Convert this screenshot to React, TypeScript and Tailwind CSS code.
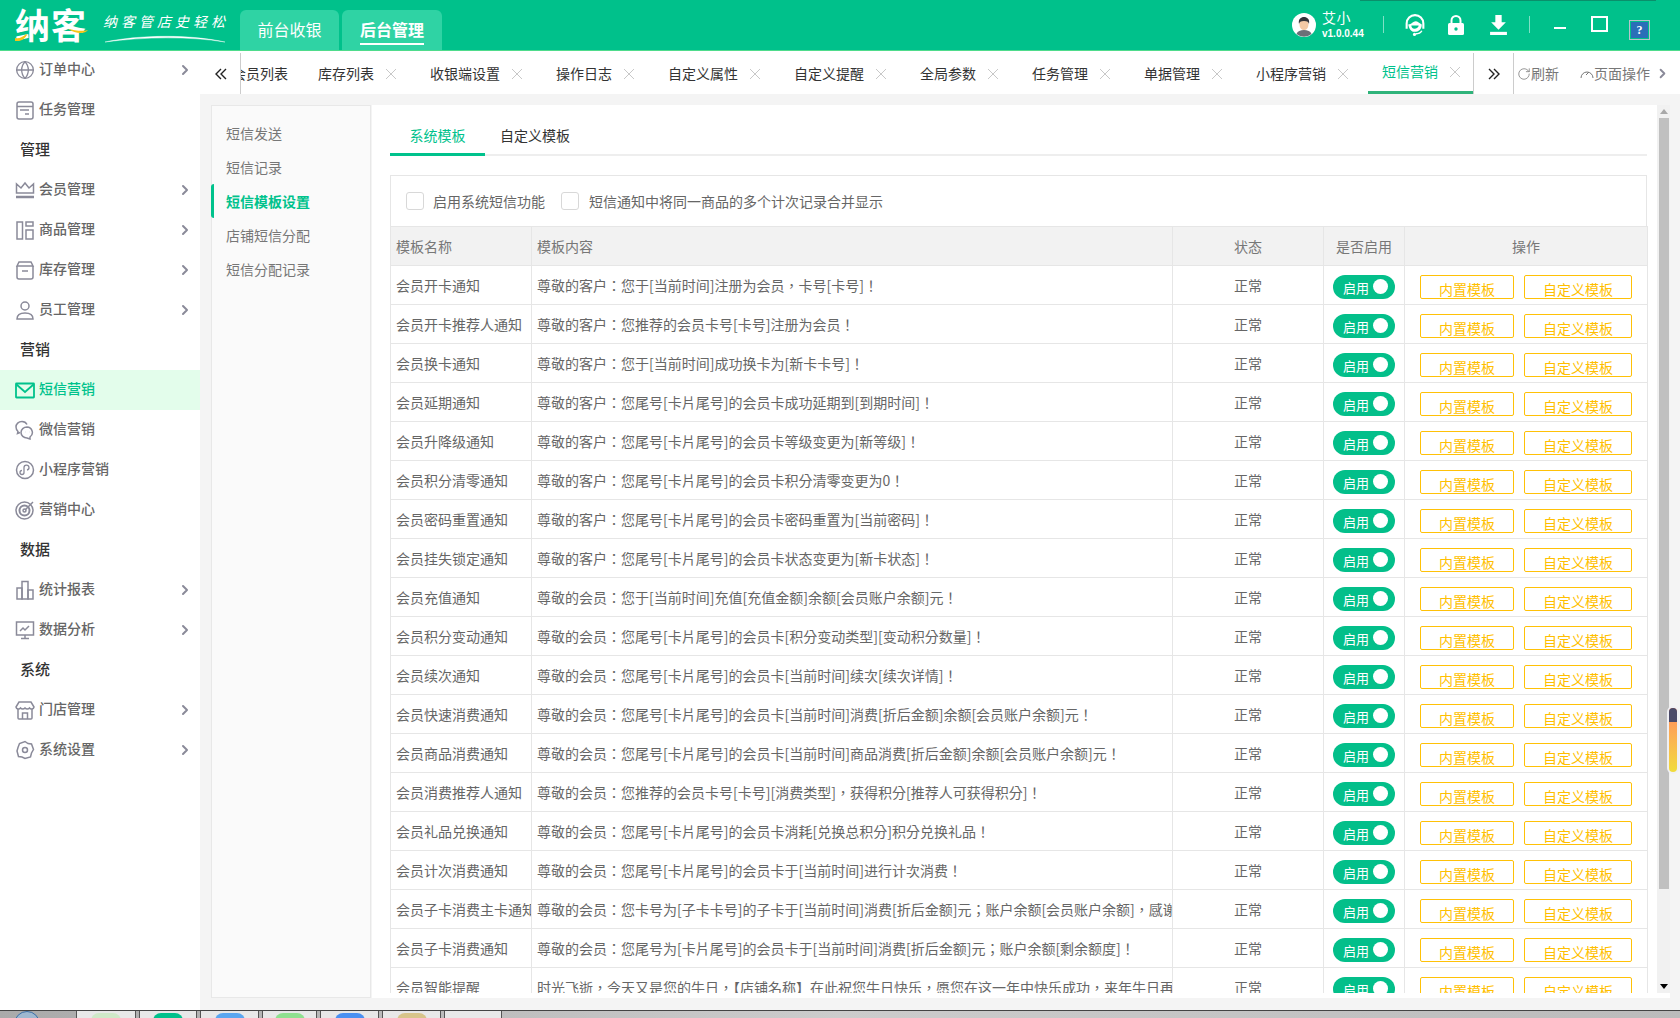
import { ChevronRight, Globe, RotateCw } from 'lucide-react'
import type { ReactNode } from 'react'

const gray = '#8a8a99'

function Ico({ children, color = gray }: { children: ReactNode; color?: string }) {
  return (
    <svg width="20" height="20" viewBox="0 0 20 20" fill="none" stroke={color} strokeWidth="1.5" className="shrink-0">
      {children}
    </svg>
  )
}

const icons: Record<string, ReactNode> = {
  task: <Ico><rect x="2" y="2" width="16" height="17" rx="2" /><path d="M2 6.5h16M5 10h9M10 14h4" /></Ico>,
  crown: <Ico><path d="M1.5 13V4l4.5 4L10 3l4 5 4.500-4v9z" /><path d="M1 17h18" strokeWidth="2.500" /></Ico>,
  goods: <Ico><rect x="2" y="2" width="5.500" height="17" /><rect x="11" y="2" width="7" height="4" /><rect x="11" y="10" width="7" height="9" /></Ico>,
  stock: <Ico><path d="M4 2h12l2 4H2z" /><path d="M2 6v11a2 2 0 0 0 2 2h12a2 2 0 0 0 2-2V6M7 11h6" /></Ico>,
  staff: <Ico><circle cx="10" cy="6" r="4" /><path d="M2 19c0-4 3-6 8-6s8 2 8 6z" /></Ico>,
  mail: <Ico color="#00c28c"><rect x="1" y="3.500" width="18" height="14" rx="0.500" strokeWidth="1.800" /><path d="M1.500 4.500 10 12l8.500-7.500" strokeWidth="1.800" /></Ico>,
  wechat: <Ico><path d="M12 4.500C11 2.500 9 1.500 7 1.500 3.500 1.500 1 4 1 7c0 2 1 3.500 2 4.500l-.5 2 2.500-1" /><path d="M12 7a6 5.500 0 1 0 0 11l3 1 0-2a5.500 5.500 0 0 0-3-10z" /><path d="M10 12h.1M14 12h.1" strokeWidth="2" /></Ico>,
  mini: <Ico><circle cx="10" cy="10" r="8.500" /><path d="M7 9.500v3a2 2 0 1 1-2-2M7 10.500v-3a2.500 2.500 0 1 1 3 2.500" transform="translate(2 0)" strokeWidth="1.300" /></Ico>,
  target: <Ico><circle cx="9.500" cy="10.500" r="8.500" /><circle cx="9.500" cy="10.500" r="5" strokeWidth="2" /><circle cx="9.500" cy="10.500" r="1.500" /><path d="M10 10l8-8" /></Ico>,
  chart: <Ico><rect x="2" y="8" width="5" height="11" /><rect x="7" y="1.500" width="6" height="17.500" /><rect x="13" y="10" width="5" height="9" /></Ico>,
  screen: <Ico><rect x="1.500" y="2" width="17" height="13" /><path d="M5 11l3-3 2 2 4-4M6 18.500h8M10 15v3.500" /></Ico>,
  store: <Ico><path d="M4 2h12l3 5a2.500 2.500 0 0 1-4.500 1A3 3 0 0 1 10 8a3 3 0 0 1-4.500 0A2.500 2.500 0 0 1 1 7z" /><path d="M3 9v9a1 1 0 0 0 1 1h12a1 1 0 0 0 1-1V9M7.500 19v-6h5v6" /></Ico>,
  gear: <Ico><path d="M10 1.500l3 2 3.500.5 2 5.500-2 3.500-1 4-5.500 1.500-3-1.500-3.500-.5-1.500-5.500 1-3.500 1.500-4z" /><circle cx="10" cy="10" r="2.500" /></Ico>,
}

type NavItem = { label: string; icon?: ReactNode; arrow?: boolean; title?: boolean; active?: boolean }

const nav: NavItem[] = [
  { label: '订单中心', icon: <Globe size={20} color={gray} strokeWidth={1.6} className="shrink-0" />, arrow: true },
  { label: '任务管理', icon: icons.task },
  { label: '管理', title: true },
  { label: '会员管理', icon: icons.crown, arrow: true },
  { label: '商品管理', icon: icons.goods, arrow: true },
  { label: '库存管理', icon: icons.stock, arrow: true },
  { label: '员工管理', icon: icons.staff, arrow: true },
  { label: '营销', title: true },
  { label: '短信营销', icon: icons.mail, active: true },
  { label: '微信营销', icon: icons.wechat },
  { label: '小程序营销', icon: icons.mini },
  { label: '营销中心', icon: icons.target },
  { label: '数据', title: true },
  { label: '统计报表', icon: icons.chart, arrow: true },
  { label: '数据分析', icon: icons.screen, arrow: true },
  { label: '系统', title: true },
  { label: '门店管理', icon: icons.store, arrow: true },
  { label: '系统设置', icon: icons.gear, arrow: true },
]

const tabs = ['库存列表', '收银端设置', '操作日志', '自定义属性', '自定义提醒', '全局参数', '任务管理', '单据管理', '小程序营销']

const smsMenu = ['短信发送', '短信记录', '短信模板设置', '店铺短信分配', '短信分配记录']

const rows = [
  ['会员开卡通知', '尊敬的客户：您于[当前时间]注册为会员，卡号[卡号]！'],
  ['会员开卡推荐人通知', '尊敬的客户：您推荐的会员卡号[卡号]注册为会员！'],
  ['会员换卡通知', '尊敬的客户：您于[当前时间]成功换卡为[新卡卡号]！'],
  ['会员延期通知', '尊敬的客户：您尾号[卡片尾号]的会员卡成功延期到[到期时间]！'],
  ['会员升降级通知', '尊敬的客户：您尾号[卡片尾号]的会员卡等级变更为[新等级]！'],
  ['会员积分清零通知', '尊敬的客户：您尾号[卡片尾号]的会员卡积分清零变更为0！'],
  ['会员密码重置通知', '尊敬的客户：您尾号[卡片尾号]的会员卡密码重置为[当前密码]！'],
  ['会员挂失锁定通知', '尊敬的客户：您尾号[卡片尾号]的会员卡状态变更为[新卡状态]！'],
  ['会员充值通知', '尊敬的会员：您于[当前时间]充值[充值金额]余额[会员账户余额]元！'],
  ['会员积分变动通知', '尊敬的会员：您尾号[卡片尾号]的会员卡[积分变动类型][变动积分数量]！'],
  ['会员续次通知', '尊敬的会员：您尾号[卡片尾号]的会员卡[当前时间]续次[续次详情]！'],
  ['会员快速消费通知', '尊敬的会员：您尾号[卡片尾号]的会员卡[当前时间]消费[折后金额]余额[会员账户余额]元！'],
  ['会员商品消费通知', '尊敬的会员：您尾号[卡片尾号]的会员卡[当前时间]商品消费[折后金额]余额[会员账户余额]元！'],
  ['会员消费推荐人通知', '尊敬的会员：您推荐的会员卡号[卡号][消费类型]，获得积分[推荐人可获得积分]！'],
  ['会员礼品兑换通知', '尊敬的会员：您尾号[卡片尾号]的会员卡消耗[兑换总积分]积分兑换礼品！'],
  ['会员计次消费通知', '尊敬的会员：您尾号[卡片尾号]的会员卡于[当前时间]进行计次消费！'],
  ['会员子卡消费主卡通知', '尊敬的会员：您卡号为[子卡卡号]的子卡于[当前时间]消费[折后金额]元；账户余额[会员账户余额]，感谢您的光临！'],
  ['会员子卡消费通知', '尊敬的会员：您尾号为[卡片尾号]的会员卡于[当前时间]消费[折后金额]元；账户余额[剩余额度]！'],
  ['会员智能提醒', '时光飞逝，今天又是您的牛日，【店铺名称】在此祝您牛日快乐，愿您在这一年中快乐成功，来年牛日再相聚！'],
]

function CloseX() {
  return (
    <svg width="10" height="10" viewBox="0 0 10 10" stroke="#c8c8c8" strokeWidth="1" className="shrink-0">
      <path d="M0 0l10 10M10 0L0 10" />
    </svg>
  )
}

function DoubleChevron({ flip }: { flip?: boolean }) {
  return (
    <svg width="12" height="12" viewBox="0 0 12 12" fill="none" stroke="#222" strokeWidth="1.400" className={flip ? 'rotate-180' : ''}>
      <path d="M1 1l5 5-5 5M6 1l5 5-5 5" />
    </svg>
  )
}

function Header() {
  return (
    <header className="h-[51px] shrink-0 flex bg-[#00c18b] border-b border-[#4fdc8c] relative">
      <div className="w-[240px] shrink-0 flex items-center pl-[15px]">
        <div className="relative w-[74px] h-[34px] mt-[-2px]">
          <span className="text-[35px] leading-[34px] font-bold text-white tracking-[1px] whitespace-nowrap">纳客</span>
          <svg width="74" height="34" viewBox="0 0 74 34" className="absolute left-0 top-0">
            <path d="M0 31c4 1 8-1 11-4l1 1c-2 4-7 7-12 6zM53 22c6 1 14 3 20 1-3 4-12 4-20-1z" fill="#f5c518" />
          </svg>
        </div>
        <div className="ml-[14px] relative w-[125px] h-[34px]">
          <span className="text-[14px] leading-[22px] text-white italic tracking-[4px] whitespace-nowrap">纳客管店史轻松</span>
          <svg width="125" height="12" viewBox="0 0 125 12" className="absolute left-0 top-[24px]">
            <path d="M2 10C30 4 80 1 122 10 85 4 40 5 2 10z" fill="#fff" stroke="#fff" strokeWidth="0.400" />
          </svg>
        </div>
      </div>
      <div className="flex items-end gap-[3px]">
        <div className="w-[99px] h-[40px] rounded-t-[6px] bg-[#2fd3a4] flex justify-center pt-[7px] text-[16px] leading-[24px] text-white">前台收银</div>
        <div className="w-[100px] h-[40px] rounded-t-[6px] bg-[#2fd3a4] flex justify-center pt-[7px]">
          <span className="h-[28px] text-[16px] leading-[24px] text-white font-bold border-b-[2px] border-white">后台管理</span>
        </div>
      </div>
      <div className="flex-1" />
      <div className="flex items-center h-[49px]">
        <svg width="24" height="24" viewBox="0 0 24 24" className="shrink-0">
          <circle cx="12" cy="12" r="12" fill="#fff" />
          <path d="M4.500 21c1-3 4-4 7.500-4s6.500 1 7.500 4a12 12 0 0 1-15 0z" fill="#6b6f78" />
          <ellipse cx="12" cy="11.500" rx="4.500" ry="5.500" fill="#f3c9a5" />
          <path d="M7 11c-1-5 2-7 5-7s6 2 5 7c-.500-2-1.500-3-5-3s-4.500 1-5 3z" fill="#33343a" />
        </svg>
        <div className="ml-[6px] w-[61px] text-white mb-[1px]">
          <div className="text-[14px] leading-[20px] tracking-[0.500px]">艾小</div>
          <div className="text-[10px] leading-[14px] font-['Liberation_Sans',sans-serif] font-bold">v1.0.0.44</div>
        </div>
        <div className="w-px h-[17px] bg-[#7fe0c5]" />
        <svg width="22" height="24" viewBox="0 0 21 23" fill="none" stroke="#fff" className="ml-[20px] shrink-0">
          <path d="M2.500 15V10a8 8 0 0 1 16 0v5" strokeWidth="2" />
          <path d="M4 11c3 0 5-3 7-3s4 2 6 3c0 5-3 7-7 7-3 0-5-2-6-7z" fill="#fff" stroke="none" />
          <path d="M7 12h7c0 2-2 3-4 3s-3-1-3-3z" fill="#00c18b" stroke="none" />
          <path d="M17 17c-1 2-3 3-6 3" strokeWidth="1.500" />
          <circle cx="10" cy="20.500" r="1.500" fill="#fff" stroke="none" />
        </svg>
        <svg width="16" height="20" viewBox="0 0 16 20" className="ml-[22px] shrink-0">
          <path d="M3.500 9V5.500a4.500 4.500 0 0 1 9 0V9" fill="none" stroke="#fff" strokeWidth="2" />
          <rect y="8" width="16" height="12" rx="1.500" fill="#fff" />
          <circle cx="8" cy="14" r="1.700" fill="#00c18b" />
        </svg>
        <svg width="17" height="20" viewBox="0 0 16 19" fill="#fff" className="ml-[26px] shrink-0">
          <path d="M5 0h6v7h4l-7 7-7-7h4z" />
          <rect y="16" width="16" height="3" />
        </svg>
        <div className="w-px h-[17px] bg-[#7fe0c5] ml-[22px]" />
        <div className="w-[12px] h-[2px] bg-white ml-[24px] mt-[6px]" />
        <div className="w-[17px] h-[16px] border-[2px] border-white ml-[25px] mb-[2px]" />
        <div className="w-[21px] h-[20px] ml-[21px] mr-[30px] mt-[10px] border border-[#b8c4cc] p-px">
          <div className="w-full h-full bg-[#2a6fb8] text-white text-[12px] leading-[16px] font-bold text-center font-['Liberation_Serif',serif]">?</div>
        </div>
      </div>
      <div className="absolute left-[1360px] top-0 w-[296px] h-px bg-[#0a8f6b]" />
    </header>
  )
}

function Sidebar() {
  return (
    <aside className="w-[200px] shrink-0 bg-white mt-[-1px]">
      {nav.map((n) =>
        n.title ? (
          <div key={n.label} className="h-[40px] pl-[20px] pb-[2px] flex items-center text-[15px] font-medium text-[#333]">{n.label}</div>
        ) : (
          <div key={n.label} className={`h-[40px] pl-[15px] pr-[7px] flex items-center ${n.active ? 'bg-[#e3fdeb]' : ''}`}>
            {n.icon}
            <span className={`ml-[4px] mt-[-3px] text-[14px] font-medium ${n.active ? 'text-[#00c28c] font-bold' : 'text-[#666]'}`}>{n.label}</span>
            {n.arrow && <ChevronRight size={16} color={gray} strokeWidth={3} className="ml-auto" />}
          </div>
        ),
      )}
    </aside>
  )
}

function TabStrip() {
  return (
    <div className="h-[43px] shrink-0 bg-white flex pt-[2px] text-[14px]">
      <div className="w-[40px] flex items-center justify-center pl-[2px]"><DoubleChevron flip /></div>
      <div className="w-[1234px] overflow-hidden border-l border-r border-[#ccc] flex">
        <div className="ml-[-23px] mr-[2px] w-[84px] shrink-0 pl-[14px] flex items-center text-[#333]">会员列表</div>
        {tabs.map((t) => (
          <div key={t} className="shrink-0 mr-[6px] pl-[14px] pr-[14px] flex items-center gap-[12px] text-[#333]">
            {t}
            <CloseX />
          </div>
        ))}
        <div className="shrink-0 pl-[14px] pr-[15px] flex items-center gap-[12px] text-[#00c28c] border-b-[3px] border-[#2fb37a]">
          <span className="mb-[1px]">短信营销</span>
          <CloseX />
        </div>
      </div>
      <div className="w-[40px] flex items-center justify-center border-r border-[#ccc]"><DoubleChevron /></div>
      <div className="flex-1 flex items-center pl-[3px] text-[#777]">
        <RotateCw size={14} strokeWidth={1.300} color="#777" className="shrink-0" />
        <span>刷新</span>
        <svg width="14" height="14" viewBox="0 0 14 14" fill="none" stroke="#777" className="ml-[21px] shrink-0">
          <path d="M1 11a6 6 0 1 1 12 0M6 8l3-3" />
        </svg>
        <span>页面操作</span>
        <ChevronRight size={15} color={gray} strokeWidth={3} className="ml-[5px]" />
      </div>
    </div>
  )
}

function Scrollbar() {
  return (
    <div className="w-[13px] shrink-0 h-[888px] bg-[#f1f1f1] flex flex-col items-center">
      <div className="h-[13px] shrink-0 flex items-center justify-center">
        <div className="w-0 h-0 border-x-[4px] border-x-transparent border-b-[5px] border-b-[#a8a8a8]" />
      </div>
      <div className="w-[10px] h-[771px] bg-[#c0c0c0]" />
      <div className="flex-1" />
      <div className="h-[13px] shrink-0 flex items-center justify-center">
        <div className="w-0 h-0 border-x-[4px] border-x-transparent border-t-[5px] border-t-black" />
      </div>
    </div>
  )
}

function SmsTable() {
  return (
    <table className="w-[1257px] table-fixed border-collapse text-[14px] text-[#666]">
      <colgroup>
        <col className="w-[141px]" />
        <col className="w-[641px]" />
        <col className="w-[151px]" />
        <col className="w-[81px]" />
        <col className="w-[243px]" />
      </colgroup>
      <thead>
        <tr className="h-[39px] bg-[#f2f2f2] text-[#777]">
          <th className="border border-[#e6e6e6] font-normal text-left pl-[5px]">模板名称</th>
          <th className="border border-[#e6e6e6] font-normal text-left pl-[5px]">模板内容</th>
          <th className="border border-[#e6e6e6] font-normal">状态</th>
          <th className="border border-[#e6e6e6] font-normal">是否启用</th>
          <th className="border border-[#e6e6e6] font-normal">操作</th>
        </tr>
      </thead>
      <tbody>
        {rows.map(([name, content]) => (
          <tr key={name} className="h-[39px]">
            <td className="border border-[#e6e6e6] pl-[5px] overflow-hidden whitespace-nowrap">{name}</td>
            <td className="border border-[#e6e6e6] pl-[5px] overflow-hidden whitespace-nowrap font-['Noto_Sans_CJK_TC','Liberation_Sans',sans-serif]">{content}</td>
            <td className="border border-[#e6e6e6] text-center">正常</td>
            <td className="border border-[#e6e6e6] pl-[9px] pt-[3px]">
              <div className="w-[62px] h-[24px] rounded-full bg-[#03bf8a] flex items-center pl-[10px] text-[13px] text-white">
                <span className="mt-[3px]">启用</span>
                <span className="ml-[4px] w-[15px] h-[15px] rounded-full bg-white" />
              </div>
            </td>
            <td className="border border-[#e6e6e6] pl-[15px] pt-[3px]">
              <div className="flex gap-[10px]">
                <button className="w-[94px] h-[24px] border border-[#ffc107] rounded-[2px] text-[14px] leading-[26px] text-[#ffbf00]">内置模板</button>
                <button className="w-[108px] h-[24px] border border-[#ffc107] rounded-[2px] text-[14px] leading-[26px] text-[#ffbf00]">自定义模板</button>
              </div>
            </td>
          </tr>
        ))}
      </tbody>
    </table>
  )
}

function Taskbar() {
  const slots = [
    { w: 'w-[60px]', c: 'bg-[#cfe8c8]' },
    { w: 'w-[58px]', c: 'bg-[#00c18b]' },
    { w: 'w-[59px]', c: 'bg-[#5aa6f0]' },
    { w: 'w-[55px]', c: 'bg-[#8fe08f]' },
    { w: 'w-[59px]', c: 'bg-[#4a90f2]' },
    { w: 'w-[59px]', c: 'bg-[#d8c48a]' },
    { w: 'w-[58px]', c: 'bg-transparent' },
  ]
  return (
    <div className="absolute left-0 right-0 bottom-0 h-[8px] bg-gradient-to-r from-[#aaa] via-[#ccc] to-[#bbb] border-t border-[#444] flex gap-[3px] pl-[76px] overflow-hidden">
      <div className="absolute left-[14px] top-0 w-[26px] h-[26px] rounded-full border border-[#3b6ea5] bg-[#9fb8d0]" />
      {slots.map((s, i) => (
        <div key={i} className={`${s.w} h-full shrink-0 bg-[#e8e8e8] border-x border-[#555] flex justify-center`}>
          <div className={`w-[30px] h-[12px] rounded-t-[8px] mt-[2px] ${s.c}`} />
        </div>
      ))}
    </div>
  )
}

export default function App() {
  return (
    <div className="relative w-[1680px] h-[1018px] overflow-hidden flex flex-col bg-white font-['Noto_Sans_CJK_SC','Liberation_Sans',sans-serif]">
      <Header />
      <div className="flex flex-1 min-h-0">
        <Sidebar />
        <div className="flex-1 flex flex-col min-w-0 bg-[#f4f4f4]">
          <TabStrip />
          <div className="flex pl-[11px] pt-[11px]">
            <nav className="w-[160px] h-[893px] shrink-0 bg-[#fafafa] border border-[#e8e8e8] pt-[10px]">
              {smsMenu.map((m, i) => (
                <div
                  key={m}
                  className={`h-[34px] flex items-center text-[14px] ${i === 2 ? 'ml-[-1px] pl-[12px] border-l-[3px] border-[#00c28c] rounded-l-[3px] text-[#00c28c] font-bold' : 'pl-[14px] text-[#777]'}`}
                >
                  {m}
                </div>
              ))}
            </nav>
            <div className="ml-px w-[1298px] h-[893px] bg-white flex">
              <main className="w-[1285px] h-[888px] overflow-hidden pl-[18px]">
                <div className="h-[51px] w-[1257px] pt-[14px] border-b-[2px] border-[#eeeeee] flex text-[14px]">
                  <div className="w-[95px] h-[37px] flex items-center justify-center pb-[2px] text-[#00c28c] border-b-[3px] border-[#00c28c]">系统模板</div>
                  <div className="h-[35px] flex items-center pl-[15px] pb-[2px] text-[#333]">自定义模板</div>
                </div>
                <div className="w-[1257px] h-[51px] mt-[19px] border-x border-t border-[#e6e6e6] flex items-center pl-[15px] text-[14px] text-[#666]">
                  <span className="w-[18px] h-[18px] border border-[#d8d8d8] rounded-[3px] bg-white" />
                  <span className="ml-[9px]">启用系统短信功能</span>
                  <span className="ml-[16px] w-[18px] h-[18px] border border-[#d8d8d8] rounded-[3px] bg-white" />
                  <span className="ml-[10px]">短信通知中将同一商品的多个计次记录合并显示</span>
                </div>
                <SmsTable />
              </main>
              <Scrollbar />
            </div>
          </div>
        </div>
      </div>
      <div className="absolute right-[3px] top-[708px] w-[8px] h-[64px] rounded-full overflow-hidden ring-2 ring-[#f0f0f4] bg-gradient-to-b from-[#ff8a5c] to-[#f0dc3c]">
        <div className="h-[14px] bg-[#4a4a68]" />
      </div>
      <Taskbar />
    </div>
  )
}
